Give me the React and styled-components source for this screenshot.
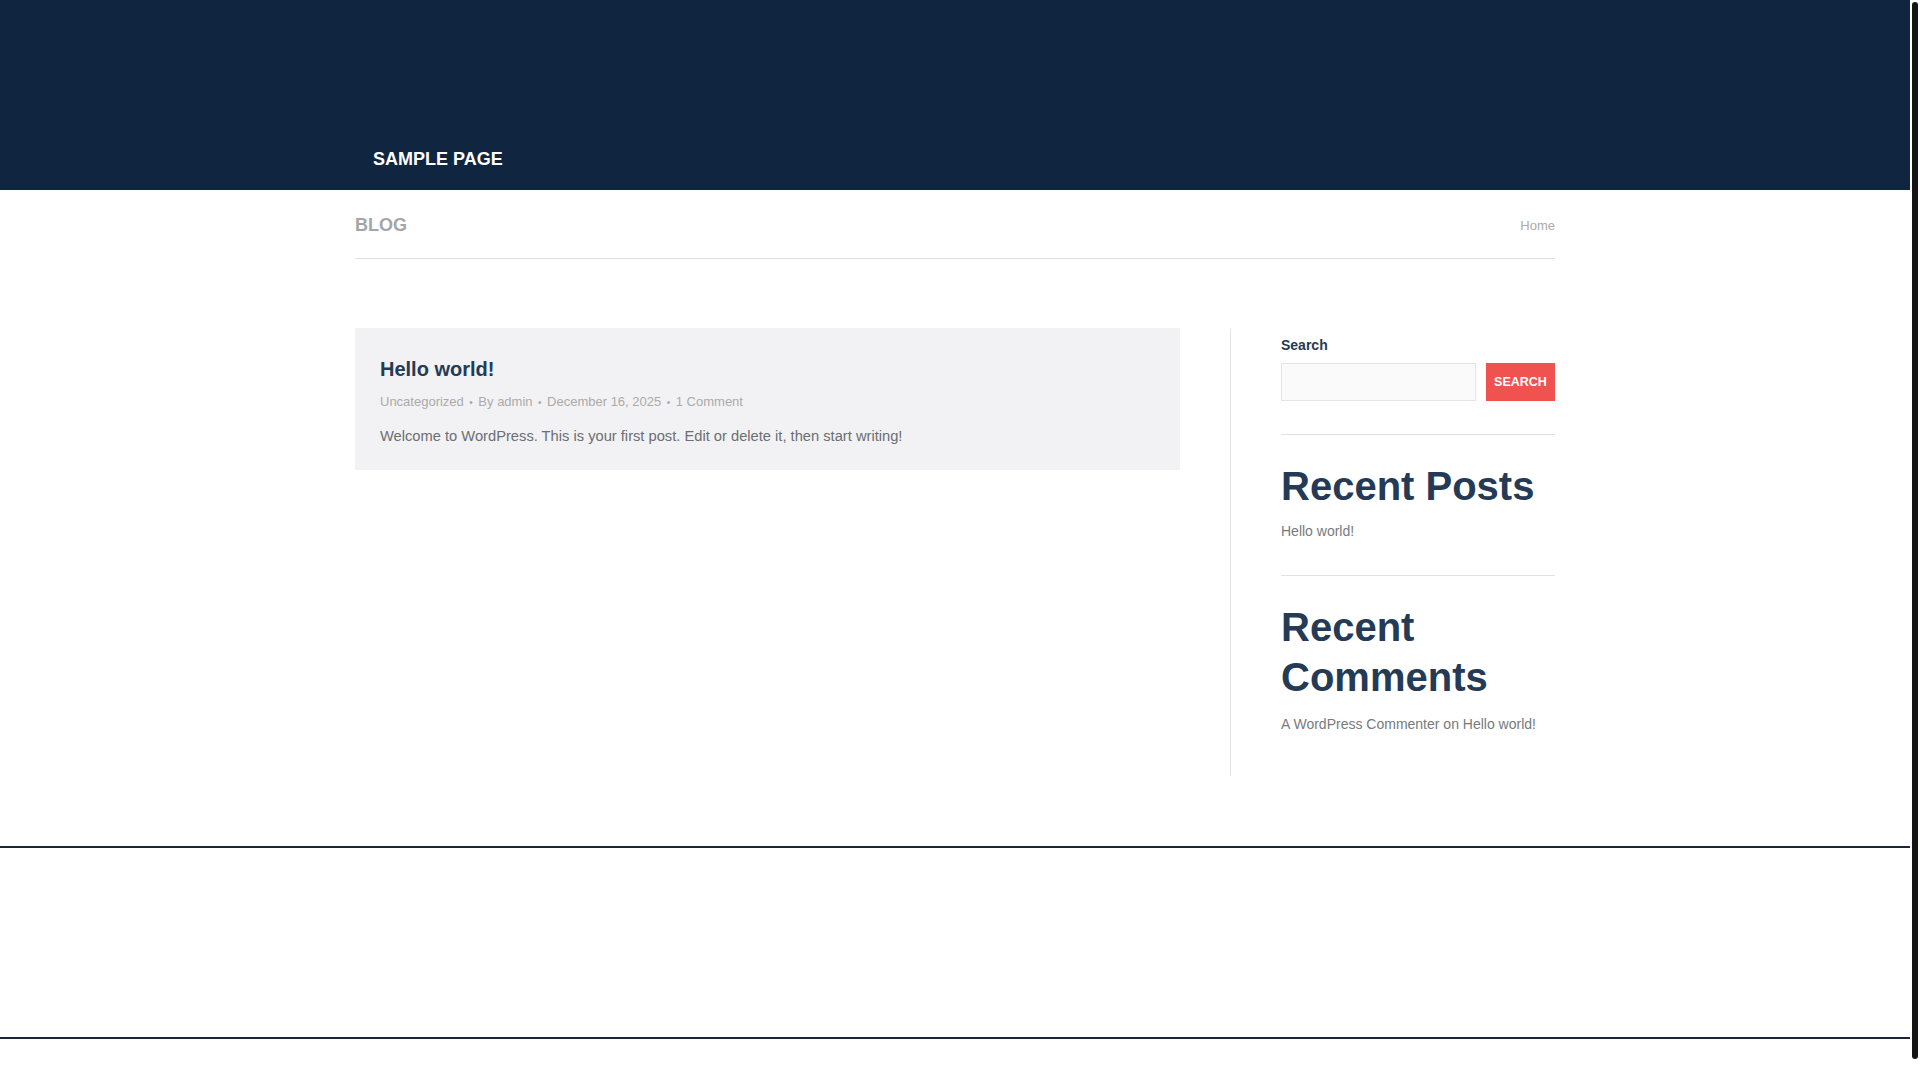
import React from "react";
import styled, { createGlobalStyle } from "styled-components";

const GlobalStyle = createGlobalStyle`
  html, body {
    margin: 0;
    padding: 0;
    background: #ffffff;
    font-family: "Liberation Sans", Arial, sans-serif;
  }
`;

const Shell = styled.div`
  display: flex;
  align-items: flex-start;
`;

const Page = styled.div`
  flex: 1;
  min-width: 0;
`;

// drawn scrollbar rail, the page in the reference shows one
const Rail = styled.div`
  position: sticky;
  top: 0;
  width: 10px;
  height: 100vh;
  background: #ffffff;
  display: flex;
  justify-content: center;
  padding-top: 2px;
  box-sizing: border-box;
`;

const Thumb = styled.div`
  width: 6px;
  height: 1057px;
  background: #151515;
  border-radius: 3px;
`;

const Header = styled.header`
  background: #0f2540;
  height: 190px;
  display: flex;
  flex-direction: column;
  justify-content: flex-end;
`;

const Container = styled.div`
  width: 1200px;
  margin: 0 auto;
`;

const Nav = styled.nav`
  display: flex;
  height: 62px;
  align-items: center;
`;

const NavLink = styled.a`
  color: #ffffff;
  font-size: 18px;
  font-weight: bold;
  text-transform: uppercase;
  padding: 0 18px;
  text-decoration: none;
`;

const TitleBar = styled(Container)`
  display: flex;
  align-items: center;
  justify-content: space-between;
  box-sizing: border-box;
  height: 69px;
  padding-top: 2px;
  border-bottom: 1px solid #e2e2e2;
`;

const PageTitle = styled.h1`
  margin: 0;
  font-size: 18px;
  font-weight: bold;
  color: #a3a5a9;
  text-transform: uppercase;
`;

const Crumb = styled.span`
  font-size: 13px;
  color: #aaaaaa;
`;

const Main = styled(Container)`
  display: grid;
  grid-template-columns: 875px 325px;
  align-items: start;
  padding-top: 69px;
`;

const Content = styled.div`
  padding-right: 50px;
`;

const Card = styled.article`
  background: #f2f2f4;
  padding: 26px 25px 24px;
`;

const PostTitle = styled.h2`
  margin: 0 0 8px;
  font-size: 20px;
  line-height: 30px;
  font-weight: bold;
  color: #253a55;
`;

const Meta = styled.div`
  display: flex;
  align-items: baseline;
  font-size: 13px;
  line-height: 20px;
  color: #aaaaaa;
  margin-bottom: 13px;
`;

const Dot = styled.span`
  font-size: 10px;
  margin: 0 5.5px;
`;

const Excerpt = styled.p`
  margin: 0;
  font-size: 14.7px;
  line-height: 20px;
  color: #6b6e72;
`;

const Sidebar = styled.aside`
  border-left: 1px solid #e2e2e2;
  padding: 0 0 42px 50px;
  margin-top: 1px;
`;

const Widget = styled.section`
  padding: ${(p) => p.$top || 0}px 0 ${(p) => p.$bottom || 0}px;
  border-bottom: ${(p) => (p.$last ? "none" : "1px solid #e2e2e2")};
`;

const Label = styled.div`
  font-size: 14px;
  font-weight: bold;
  color: #253a55;
  line-height: 20px;
  margin-bottom: 8px;
`;

const SearchRow = styled.form`
  display: flex;
  gap: 10px;
`;

const Input = styled.input`
  width: 195px;
  height: 38px;
  box-sizing: border-box;
  border: 1px solid #e5e5e5;
  background: #fafafa;
  margin: 0;
`;

const Button = styled.button`
  flex: 1;
  height: 38px;
  border: none;
  background: #ef524f;
  color: #ffffff;
  font-family: "Liberation Sans", Arial, sans-serif;
  font-size: 12.5px;
  font-weight: bold;
  padding: 0;
`;

const WidgetTitle = styled.h2`
  margin: 0 0 ${(p) => p.$gap || 10}px;
  font-size: 40px;
  line-height: 50px;
  font-weight: bold;
  color: #253a55;
`;

const WidgetText = styled.div`
  font-size: 14px;
  line-height: 20px;
  color: #777a7e;
`;

const Footer = styled.footer`
  margin-top: 70px;
  height: 189px;
  border-top: 2px solid #1a2536;
  border-bottom: 2px solid #1a2536;
`;

const BottomBar = styled.div`
  height: 56px;
`;

const meta = ["Uncategorized", "By admin", "December 16, 2025", "1 Comment"];

export default function App() {
  return (
    <Shell>
      <GlobalStyle />
      <Page>
        <Header>
          <Container>
            <Nav>
              <NavLink href="#">Sample Page</NavLink>
            </Nav>
          </Container>
        </Header>
        <TitleBar>
          <PageTitle>Blog</PageTitle>
          <Crumb>Home</Crumb>
        </TitleBar>
        <Main>
          <Content>
            <Card>
              <PostTitle>Hello world!</PostTitle>
              <Meta>
                {meta.map((m, i) => (
                  <React.Fragment key={m}>
                    {i > 0 && <Dot>•</Dot>}
                    <span>{m}</span>
                  </React.Fragment>
                ))}
              </Meta>
              <Excerpt>
                Welcome to WordPress. This is your first post. Edit or delete
                it, then start writing!
              </Excerpt>
            </Card>
          </Content>
          <Sidebar>
            <Widget $top={6} $bottom={33}>
              <Label>Search</Label>
              <SearchRow onSubmit={(e) => e.preventDefault()}>
                <Input type="text" />
                <Button type="submit">SEARCH</Button>
              </SearchRow>
            </Widget>
            <Widget $top={26} $bottom={34}>
              <WidgetTitle>Recent Posts</WidgetTitle>
              <WidgetText>Hello world!</WidgetText>
            </Widget>
            <Widget $top={26} $last>
              <WidgetTitle $gap={12}>Recent Comments</WidgetTitle>
              <WidgetText>A WordPress Commenter on Hello world!</WidgetText>
            </Widget>
          </Sidebar>
        </Main>
        <Footer />
        <BottomBar />
      </Page>
      <Rail>
        <Thumb />
      </Rail>
    </Shell>
  );
}
